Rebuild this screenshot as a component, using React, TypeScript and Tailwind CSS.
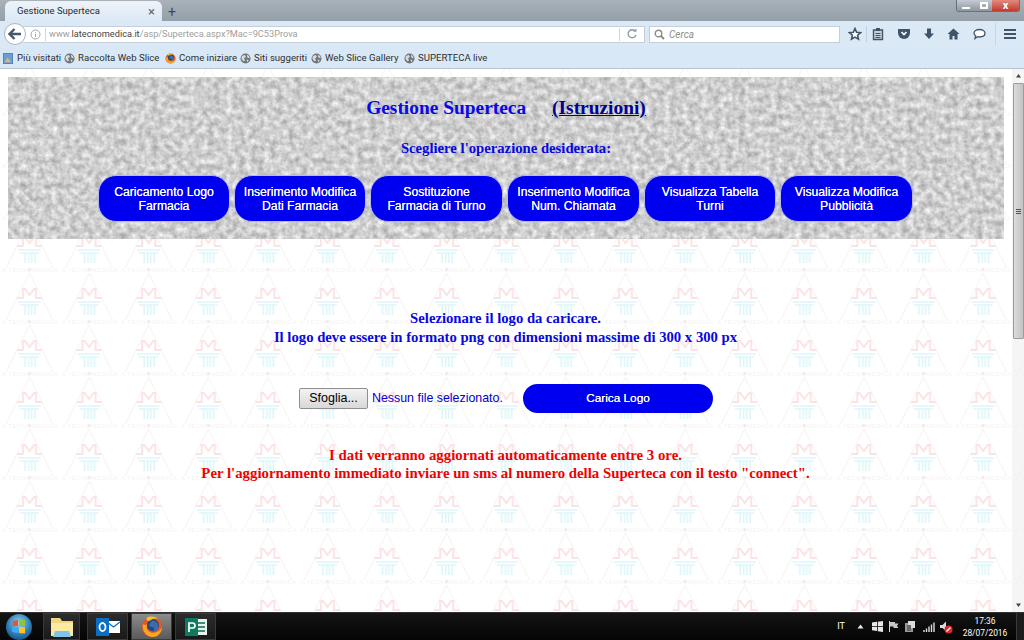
import React from "react";

const ui = { fontFamily: 'Roboto, "Liberation Sans", Arial, sans-serif' };
const arial = { fontFamily: '"Liberation Sans", Arial, sans-serif' };
const serif = { fontFamily: '"Liberation Serif", "Times New Roman", serif' };

function Globe() {
  return (
    <svg width="11" height="11" viewBox="0 0 12 12" className="shrink-0">
      <circle cx="6" cy="6" r="5.5" fill="#6f7478" />
      <path d="M2 3.5 L5 2 L6.5 4 L4.5 6 L5.5 8.5 L3.5 9 L1.5 6 Z M7.5 1.5 L10 3.5 L10.5 6 L8 5 Z M7 7 L9.5 7.5 L8 10 Z" fill="#d5dadd" />
    </svg>
  );
}

function FirefoxIcon({ size }: { size: number }) {
  return (
    <svg width={size} height={size} viewBox="0 0 24 24" className="shrink-0">
      <circle cx="12" cy="12" r="11" fill="#e8571f" />
      <circle cx="13" cy="10" r="6.6" fill="#24467f" />
      <path d="M12 5 C16 5 19 8 19 12 C19 16 15 18 12 17 C15 16 15 12 12 12 C9 12 8 10 10 8 Z" fill="#3a6cae" />
      <path d="M2 9 C1 16 6 23 13 23 C19 23 23 17 23 12 C21 17 16 19 11 18 C7 17 5 13 7 9 C5 10 4 10 2 9 Z" fill="#f5a623" />
      <path d="M6 2 C9 0 15 0 19 3 C15 2 12 3 10 5 C8 6 6 6 6 2 Z" fill="#f7c325" />
    </svg>
  );
}

function Tile() {
  return (
    <svg className="absolute inset-0 h-full w-full">
      <defs>
        <pattern id="lm" width="59.6" height="52" patternUnits="userSpaceOnUse" patternTransform="translate(0 -4)">
          <path d="M29.5 0 L53 47 M29.5 0 L6 47" stroke="#f6f3f3" strokeWidth="1" fill="none" />
          <path d="M17 25 H23 V16 H25 L29.5 22 L34 16 H36 V25 H42" stroke="#fae3e5" strokeWidth="2" fill="none" />
          <path d="M18 29 H41 M20 32 H39 M25 32 V42 M28.5 32 V42 M31.5 32 V42 M35 32 V42" stroke="#dff6f9" strokeWidth="1.7" fill="none" />
          <text x="2" y="51" fontSize="6" fill="#f4f1f1" fontFamily="Liberation Sans" textLength="56">A TECNOMEDICA</text>
          <circle cx="29.5" cy="48.5" r="1.5" fill="#f0e9e9" />
        </pattern>
      </defs>
      <rect width="100%" height="100%" fill="url(#lm)" />
    </svg>
  );
}

function Texture() {
  return (
    <svg className="absolute inset-0 h-full w-full">
      <defs>
        <filter id="stone" x="0" y="0" width="100%" height="100%" colorInterpolationFilters="sRGB">
          <feTurbulence type="fractalNoise" baseFrequency="0.16" numOctaves="5" seed="23" />
          <feColorMatrix type="matrix" values="0.42 0 0 0 0.6  0.42 0 0 0 0.6  0.42 0 0 0 0.6  0 0 0 0 1" />
        </filter>
      </defs>
      <rect width="100%" height="100%" fill="#cfcfcf" filter="url(#stone)" />
    </svg>
  );
}

const buttons = [
  { w: "w-[132px]", a: "Caricamento Logo", b: "Farmacia" },
  { w: "w-[132px]", a: "Inserimento Modifica", b: "Dati Farmacia" },
  { w: "w-[133px]", a: "Sostituzione", b: "Farmacia di Turno" },
  { w: "w-[133px]", a: "Inserimento Modifica", b: "Num. Chiamata" },
  { w: "w-[132px]", a: "Visualizza Tabella", b: "Turni" },
  { w: "w-[133px]", a: "Visualizza Modifica", b: "Pubblicità" },
];

const bookmarks = [
  { t: "Raccolta Web Slice", ff: false, w: "w-[82px]" },
  { t: "Come iniziare", ff: true, w: "w-[56px]" },
  { t: "Siti suggeriti", ff: false, w: "w-[52px]" },
  { t: "Web Slice Gallery", ff: false, w: "w-[74px]" },
  { t: "SUPERTECA live", ff: false, w: "w-[72px]" },
];

const ic = "#3f5468";

function TaskBtn({ active, wide, children }: { active?: boolean; wide?: boolean; children: React.ReactNode }) {
  return (
    <div
      className={
        "flex h-[27px] items-center justify-center border border-[#3a3a3a] " +
        (wide ? "w-[41px] " : "w-[37px] ") +
        (active ? "bg-gradient-to-b from-[#8d8d8d] to-[#5a5a5a]" : "bg-gradient-to-b from-[#2c2c2c] to-[#1a1a1a]")
      }
    >
      {children}
    </div>
  );
}

export default function App() {
  return (
    <div className="flex h-[640px] w-[1024px] flex-col overflow-hidden bg-white text-[9.6px]" style={ui}>
      {/* title bar */}
      <div className="flex h-[21px] items-end bg-gradient-to-b from-[#a9b1b9] to-[#949fa9] pl-[5px]">
        <div className="flex h-[20px] w-[157px] items-center justify-between rounded-t-[6px] bg-gradient-to-b from-[#eef3f8] to-[#dbe9f6] pl-[12px] pr-[7px] text-[9.5px] text-[#2b2b2b]">
          <span>Gestione Superteca</span>
          <span className="text-[13px] leading-none text-[#666]">×</span>
        </div>
        <span className="mb-[2px] ml-[6px] text-[14px] leading-none text-[#445]">+</span>
        <div className="mb-auto ml-auto mr-[4px] flex h-[12px] w-[64px] overflow-hidden rounded-b-[3px] border border-t-0 border-[#6a7078]">
          <div className="flex w-[18px] items-end justify-center bg-gradient-to-b from-[#c5cbd2] to-[#8e969e] pb-[2px]">
            <div className="h-[2px] w-[8px] bg-white" />
          </div>
          <div className="flex w-[17px] items-center justify-center bg-gradient-to-b from-[#c5cbd2] to-[#8e969e]">
            <div className="h-[7px] w-[8px] border-2 border-white" />
          </div>
          <div className="flex flex-1 items-center justify-center bg-gradient-to-b from-[#e08a80] to-[#c0392b] text-[11px] font-bold leading-none text-white">
            x
          </div>
        </div>
      </div>

      {/* nav bar */}
      <div className="flex h-[26px] items-center bg-[#dbe9f6] pl-[4px]">
        <div className="z-10 flex h-[22px] w-[22px] items-center justify-center rounded-full border border-[#a9b6c3] bg-white">
          <svg width="14" height="12" viewBox="0 0 14 12">
            <path d="M6.5 1 L1.5 6 L6.5 11 M2 6 H13" stroke="#44586a" strokeWidth="2.4" fill="none" />
          </svg>
        </div>
        <div className="ml-[-3px] flex h-[17px] w-[622px] items-center rounded-r-[1px] border border-l-0 border-[#c3cfda] bg-white pl-[7px] pr-[2px] text-[9.2px] text-[#a0a0a0]">
          <svg width="11" height="11" viewBox="0 0 11 11" className="mr-[4px] shrink-0">
            <circle cx="5.5" cy="5.5" r="4.5" stroke="#a5a5a5" fill="none" />
            <path d="M5.5 3 V3.8 M5.5 4.8 V8" stroke="#a5a5a5" />
          </svg>
          <span className="mr-[3px] h-[13px] w-px bg-[#d5d5d5]" />
          <span>
            www.<span className="text-[#444]">latecnomedica.it</span>/asp/Superteca.aspx?Mac=9C53Prova
          </span>
          <span className="ml-auto h-[13px] w-px bg-[#d5d5d5]" />
          <svg width="12" height="12" viewBox="0 0 12 12" className="ml-[6px] mr-[4px] shrink-0">
            <path d="M9.5 3.5 A4 4 0 1 0 10 7" stroke="#8b98a5" strokeWidth="1.3" fill="none" />
            <path d="M7 3.5 H10.5 V0.5 Z" fill="#8b98a5" />
          </svg>
        </div>
        <div className="ml-[4px] flex h-[17px] w-[191px] items-center border border-[#c3cfda] bg-white pl-[4px] text-[10px] italic text-[#8c8c8c]">
          <svg width="11" height="11" viewBox="0 0 11 11" className="mr-[4px]">
            <circle cx="4.5" cy="4.5" r="3.3" stroke="#8a8a8a" strokeWidth="1.4" fill="none" />
            <path d="M7 7 L10 10" stroke="#8a8a8a" strokeWidth="1.8" />
          </svg>
          Cerca
        </div>
        <div className="ml-[8px] flex items-center">
          <svg width="14" height="14" viewBox="0 0 14 14">
            <path d="M7 1.5 L8.6 5.2 L12.6 5.6 L9.6 8.2 L10.5 12.2 L7 10.1 L3.5 12.2 L4.4 8.2 L1.4 5.6 L5.4 5.2 Z" stroke={ic} strokeWidth="1.6" fill="white" />
          </svg>
          <span className="mx-[4px] h-[16px] w-px bg-[#c3cfda]" />
          <svg width="12" height="14" viewBox="0 0 12 14" className="ml-[1px]">
            <path d="M1.5 3 H10.5 V12.5 H1.5 Z" stroke={ic} strokeWidth="1.4" fill="#c6d3df" />
            <path d="M4 1 H8 V4 H4 Z" fill={ic} />
            <path d="M3.5 6.5 H8.5 M3.5 8.5 H8.5 M3.5 10.5 H8.5" stroke={ic} />
          </svg>
          <svg width="14" height="12" viewBox="0 0 14 12" className="ml-[13px]">
            <path d="M1 1 H13 V5 A6 6 0 0 1 1 5 Z" fill={ic} />
            <path d="M4.5 4 L7 6.5 L9.5 4" stroke="white" strokeWidth="1.6" fill="none" />
          </svg>
          <svg width="12" height="12" viewBox="0 0 12 12" className="ml-[12px]">
            <path d="M4 0.5 H8 V5.5 H11 L6 11 L1 5.5 H4 Z" fill={ic} />
          </svg>
          <svg width="13" height="12" viewBox="0 0 13 12" className="ml-[12px]">
            <path d="M6.5 0.5 L12.5 6 H10.5 V11.5 H7.5 V8 H5.5 V11.5 H2.5 V6 H0.5 Z" fill={ic} />
          </svg>
          <svg width="13" height="12" viewBox="0 0 13 12" className="ml-[13px]">
            <path d="M6.5 1.5 C9.5 1.5 12 3 12 5.3 C12 7.6 9.5 9 6.5 9 C5.7 9 5 8.9 4.4 8.7 L2 10.5 L2.6 7.8 C1.6 7.1 1 6.3 1 5.3 C1 3 3.5 1.5 6.5 1.5 Z" stroke={ic} strokeWidth="1.3" fill="white" />
          </svg>
          <span className="ml-[9px] h-[22px] w-px bg-[#c9d6e2]" />
          <div className="ml-[8px] flex w-[12px] flex-col gap-[2px]">
            <div className="h-[2px] bg-[#3f5468]" />
            <div className="h-[2px] bg-[#3f5468]" />
            <div className="h-[2px] bg-[#3f5468]" />
          </div>
        </div>
      </div>

      {/* bookmarks */}
      <div className="flex h-[22px] items-center border-b border-[#b6c2cd] bg-[#d9e8f6] pl-[3px] pt-[2px] text-[#2f2f2f]">
        <svg width="10" height="11" viewBox="0 0 11 12" className="mr-[4px] shrink-0">
          <rect x="0.5" y="0.5" width="10" height="11" fill="#6d9ed2" stroke="#4f7eb3" />
          <path d="M2 10 L5 5 L9 10 Z" fill="#e2b46d" />
        </svg>
        <span className="w-[42px] whitespace-nowrap">Più visitati</span>
        {bookmarks.map((b) => (
          <div key={b.t} className="ml-[5px] flex items-center gap-[3px]">
            {b.ff ? <FirefoxIcon size={11} /> : <Globe />}
            <span className={b.w + " whitespace-nowrap"}>{b.t}</span>
          </div>
        ))}
      </div>

      {/* page */}
      <div className="relative flex min-h-0 flex-1">
        <Tile />
        <div className="relative min-w-0 flex-1 pt-[8px] text-center font-bold text-[#0000ff]" style={serif}>
          <div className="relative ml-[8px] h-[162px] w-[996px]">
            <Texture />
            <div className="relative flex flex-col items-center">
              <div className="mt-[20px] flex h-[22px] items-center text-[19.4px] leading-[22px]">
                <span className="text-[#0808e8]">Gestione Superteca</span>
                <span className="ml-[26px] text-[#000099] underline">(Istruzioni)</span>
              </div>
              <div className="mt-[20px] h-[18px] text-[14.7px] leading-[18px] text-[#0808e0]">Scegliere l'operazione desiderata:</div>
              <div className="mt-[18px] flex gap-[4px] pr-[1px]" style={arial}>
                {buttons.map((b) => (
                  <div
                    key={b.a}
                    className={b.w + " flex h-[47px] flex-col items-center justify-center rounded-[18px] border border-[#b8b8ee] bg-[#0000f0] text-[12.2px] font-normal leading-[14px] text-white [text-shadow:0_0_0.5px_white]"}
                  >
                    <span>{b.a}</span>
                    <span>{b.b}</span>
                  </div>
                ))}
              </div>
            </div>
          </div>

          <div className="mt-[70px] pr-[1px] text-[14.7px] leading-[19px] text-[#0808e0]">
            <div>Selezionare il logo da caricare.</div>
            <div>Il logo deve essere in formato png con dimensioni massime di 300 x 300 px</div>
          </div>

          <div className="mt-[37px] flex h-[29px] items-center pl-[299px] font-normal" style={arial}>
            <div className="flex h-[21px] w-[69px] items-center justify-center rounded-[2px] border border-[#8f8f8f] bg-gradient-to-b from-[#f4f4f4] to-[#d8d8d8] text-[12.5px] text-black">
              Sfoglia...
            </div>
            <span className="ml-[4px] w-[151px] text-left text-[12.4px] text-[#0000cc]">Nessun file selezionato.</span>
            <div className="flex h-[29px] w-[190px] items-center justify-center rounded-full bg-[#0000f0] text-[11.8px] text-white [text-shadow:0_0_0.5px_white]">
              Carica Logo
            </div>
          </div>

          <div className="mt-[33px] pr-[1px] text-[14.8px] leading-[18px] text-[#f00000]">
            <div>I dati verranno aggiornati automaticamente entre 3 ore.</div>
            <div>Per l'aggiornamento immediato inviare un sms al numero della Superteca con il testo "connect".</div>
          </div>
        </div>

        {/* scrollbar */}
        <div className="relative flex w-[12px] flex-col items-center bg-[#f1f1f1]/70">
          <svg width="7" height="14" viewBox="0 0 7 14" className="shrink-0">
            <path d="M3.5 5 L6 8.5 H1 Z" fill="#444" />
          </svg>
          <div className="flex h-[256px] w-[11px] items-center justify-center rounded-[1px] border border-[#9b9b9b] bg-gradient-to-r from-[#dcdcdc] to-[#c2c2c2]">
            <div className="flex w-[5px] flex-col gap-[1px]">
              <div className="h-px bg-[#555]" />
              <div className="h-px bg-[#555]" />
              <div className="h-px bg-[#555]" />
            </div>
          </div>
          <svg width="7" height="14" viewBox="0 0 7 14" className="mt-auto shrink-0">
            <path d="M3.5 9 L6 5.5 H1 Z" fill="#444" />
          </svg>
        </div>
      </div>

      {/* taskbar */}
      <div className="flex h-[28px] items-center border-t border-[#333] bg-gradient-to-b from-[#141414] to-[#050505] text-white">
        <svg width="28" height="28" viewBox="0 0 28 28" className="ml-[5px] shrink-0">
          <defs>
            <radialGradient id="orb" cx="50%" cy="35%" r="70%">
              <stop offset="0%" stopColor="#9fd4ef" />
              <stop offset="60%" stopColor="#2f7fb8" />
              <stop offset="100%" stopColor="#134b78" />
            </radialGradient>
          </defs>
          <circle cx="14" cy="14" r="13" fill="url(#orb)" />
          <path d="M8 8 L13 7 V13 H7.5 Z" fill="#e4572e" />
          <path d="M14 7 L20 6.5 V13 H14 Z" fill="#8cc63f" />
          <path d="M7.5 14 H13 V20 L7 19 Z" fill="#3fa9f5" />
          <path d="M14 14 H20 V20.5 L14 20 Z" fill="#fbc02d" />
        </svg>
        <div className="ml-[10px]">
          <TaskBtn>
            <svg width="26" height="22" viewBox="0 0 26 22">
              <path d="M2 2 H11 L13 5 H24 V20 H2 Z" fill="#f3d77e" />
              <path d="M2 7 H24 V20 H2 Z" fill="#fbeaa5" />
              <path d="M6 15 H20 L22 21 H4 Z" fill="#7fc4e8" />
            </svg>
          </TaskBtn>
        </div>
        <div className="ml-[7px] flex gap-[3px]">
          <TaskBtn wide>
            <svg width="24" height="20" viewBox="0 0 24 20">
              <rect x="11" y="4" width="13" height="12" fill="white" />
              <path d="M11 5 L17.5 10 L24 5" stroke="#0a6ec4" strokeWidth="1.3" fill="none" />
              <rect x="0" y="1" width="13" height="18" fill="#0a6ec4" />
              <ellipse cx="6.5" cy="10" rx="3" ry="4" stroke="white" strokeWidth="1.8" fill="none" />
            </svg>
          </TaskBtn>
          <TaskBtn active wide>
            <FirefoxIcon size={22} />
          </TaskBtn>
          <TaskBtn wide>
            <svg width="24" height="20" viewBox="0 0 24 20">
              <rect x="11" y="2" width="12" height="16" fill="#e8f3ee" />
              <path d="M14 6 H21 M14 10 H21 M14 14 H21" stroke="#0e6b54" strokeWidth="1.5" />
              <rect x="1" y="1" width="13" height="18" fill="#0e7a5f" />
              <path d="M5 15 V6 H8.5 A2.3 2.3 0 0 1 8.5 11 H5" stroke="white" strokeWidth="1.7" fill="none" />
            </svg>
          </TaskBtn>
        </div>

        <div className="ml-auto flex items-center">
          <span className="mr-[12px] text-[9px]">IT</span>
          <svg width="7" height="5" viewBox="0 0 7 5" className="mr-[8px]">
            <path d="M3.5 0.5 L6.5 4.5 H0.5 Z" fill="#e8e8e8" />
          </svg>
          <svg width="11" height="11" viewBox="0 0 11 11" className="mr-[5px]">
            <path d="M0 1.5 L5 0.8 V5 H0 Z M5.8 0.7 L11 0 V5 H5.8 Z M0 5.8 H5 V10 L0 9.3 Z M5.8 5.8 H11 V11 L5.8 10.2 Z" fill="#e8e8e8" />
          </svg>
          <svg width="11" height="11" viewBox="0 0 11 11" className="mr-[5px]">
            <path d="M1.5 0 V11" stroke="#d8d8d8" />
            <path d="M2 1 H7 V2.5 H10.5 L9 5 L10.5 7 H5.5 V5.5 H2 Z" fill="#c8c8c8" />
          </svg>
          <svg width="12" height="13" viewBox="0 0 12 13" className="mr-[7px]">
            <path d="M1 3 H9 V12 H1 Z" fill="#9a9a9a" />
            <path d="M4 1 H11 V8 H7 V5 H4 Z" fill="#dcdcdc" />
            <path d="M3 6 H7 M3 8 H7 M3 10 H7" stroke="#333" />
          </svg>
          <svg width="12" height="10" viewBox="0 0 12 10" className="mr-[4px]">
            <path d="M1 8 V10 M3.5 6.5 V10 M6 4.5 V10 M8.5 2.5 V10 M11 0.5 V10" stroke="#dcdcdc" strokeWidth="1.4" />
          </svg>
          <svg width="14" height="14" viewBox="0 0 14 14" className="mr-[7px]">
            <path d="M1 5 H3.5 L7 1.5 V11 L3.5 8 H1 Z" fill="#dcdcdc" />
            <circle cx="9.5" cy="9.5" r="4" fill="#d92b2b" />
            <path d="M7.5 11.5 L11.5 7.5" stroke="white" strokeWidth="1.3" />
          </svg>
          <div className="w-[50px] pt-[1px] text-center text-[8.4px] leading-[12px]">
            <div>17:36</div>
            <div>28/07/2016</div>
          </div>
          <div className="ml-[6px] h-[27px] w-[8px] border-l border-[#3a3a3a] bg-[#1c1c1c]" />
        </div>
      </div>
    </div>
  );
}
